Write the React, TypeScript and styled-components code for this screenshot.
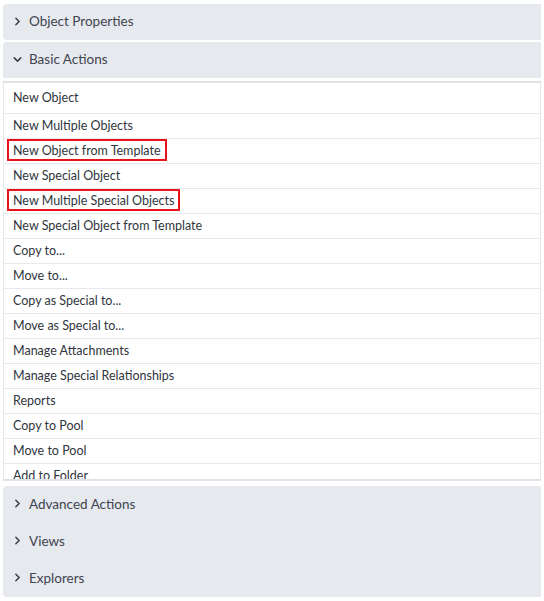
import styled, { createGlobalStyle } from 'styled-components';
import { ChevronRight, ChevronDown } from 'lucide-react';

const GlobalStyle = createGlobalStyle`
    html, body {
        margin: 0;
        padding: 0;
        background: #ffffff;
    }
    body {
        font-family: Lato, "Open Sans", "Liberation Sans", sans-serif;
    }
`

const Panel = styled.div`
    padding: 4px 3px 4px 3px;
    width: 538px;
    display: flex;
    flex-direction: column;
`

const Section = styled.div<{ $gap: number }>`
    margin-bottom: ${p => p.$gap}px;
`

const Header = styled.div<{ $round: string; $h?: number }>`
    height: ${p => p.$h ?? 36}px;
    display: flex;
    align-items: center;
    gap: 5px;
    padding: 0 0 2px 8px;
    background: #e6e9ee;
    color: #3f4450;
    font-size: 13.5px;
    border-radius: ${p => p.$round};
    box-sizing: border-box;
    svg {
        color: #3a3f4a;
        flex-shrink: 0;
    }
`

const List = styled.ul`
    list-style: none;
    margin: 3px 0 0 0;
    padding: 0;
    height: 400px;
    overflow: hidden;
    border: 1px solid #e6e7ea;
    border-top: 2px solid #dfe2e6;
    border-bottom: 2px solid #dfe2e6;
    box-sizing: border-box;
`

const Item = styled.li`
    height: 25px;
    display: flex;
    align-items: center;
    padding: 0 0 2px 9px;
    font-size: 12.5px;
    color: #30353d;
    border-bottom: 1px solid #e8e9ec;
    box-sizing: border-box;
    &:first-child {
        height: 31px;
    }
`

const Marked = styled.span`
    border: 2px solid #e8141b;
    padding: 2px 4px 1px 4px;
    margin-left: -6px;
`

const actions = [
    'New Object',
    'New Multiple Objects',
    'New Object from Template',
    'New Special Object',
    'New Multiple Special Objects',
    'New Special Object from Template',
    'Copy to...',
    'Move to...',
    'Copy as Special to...',
    'Move as Special to...',
    'Manage Attachments',
    'Manage Special Relationships',
    'Reports',
    'Copy to Pool',
    'Move to Pool',
    'Add to Folder',
]

const marked = ['New Object from Template', 'New Multiple Special Objects']

const App = () => {
    return <>
        <GlobalStyle />
        <Panel>
            <Section $gap={2}>
                <Header $round='4px 0 0 4px'>
                    <ChevronRight size={13} strokeWidth={2.8} />
                    Object Properties
                </Header>
            </Section>
            <Section $gap={5}>
                <Header $round='4px 0 0 0'>
                    <ChevronDown size={13} strokeWidth={2.8} />
                    Basic Actions
                </Header>
                <List>
                    {actions.map(a => (
                        <Item key={a}>
                            {marked.includes(a) ? <Marked>{a}</Marked> : <span>{a}</span>}
                        </Item>
                    ))}
                </List>
            </Section>
            <Section $gap={0}>
                <Header $round='4px 0 0 0' $h={37}>
                    <ChevronRight size={13} strokeWidth={2.8} />
                    Advanced Actions
                </Header>
                <Header $round='0' $h={37}>
                    <ChevronRight size={13} strokeWidth={2.8} />
                    Views
                </Header>
                <Header $round='0 0 0 4px' $h={37}>
                    <ChevronRight size={13} strokeWidth={2.8} />
                    Explorers
                </Header>
            </Section>
        </Panel>
    </>
}

export default App
